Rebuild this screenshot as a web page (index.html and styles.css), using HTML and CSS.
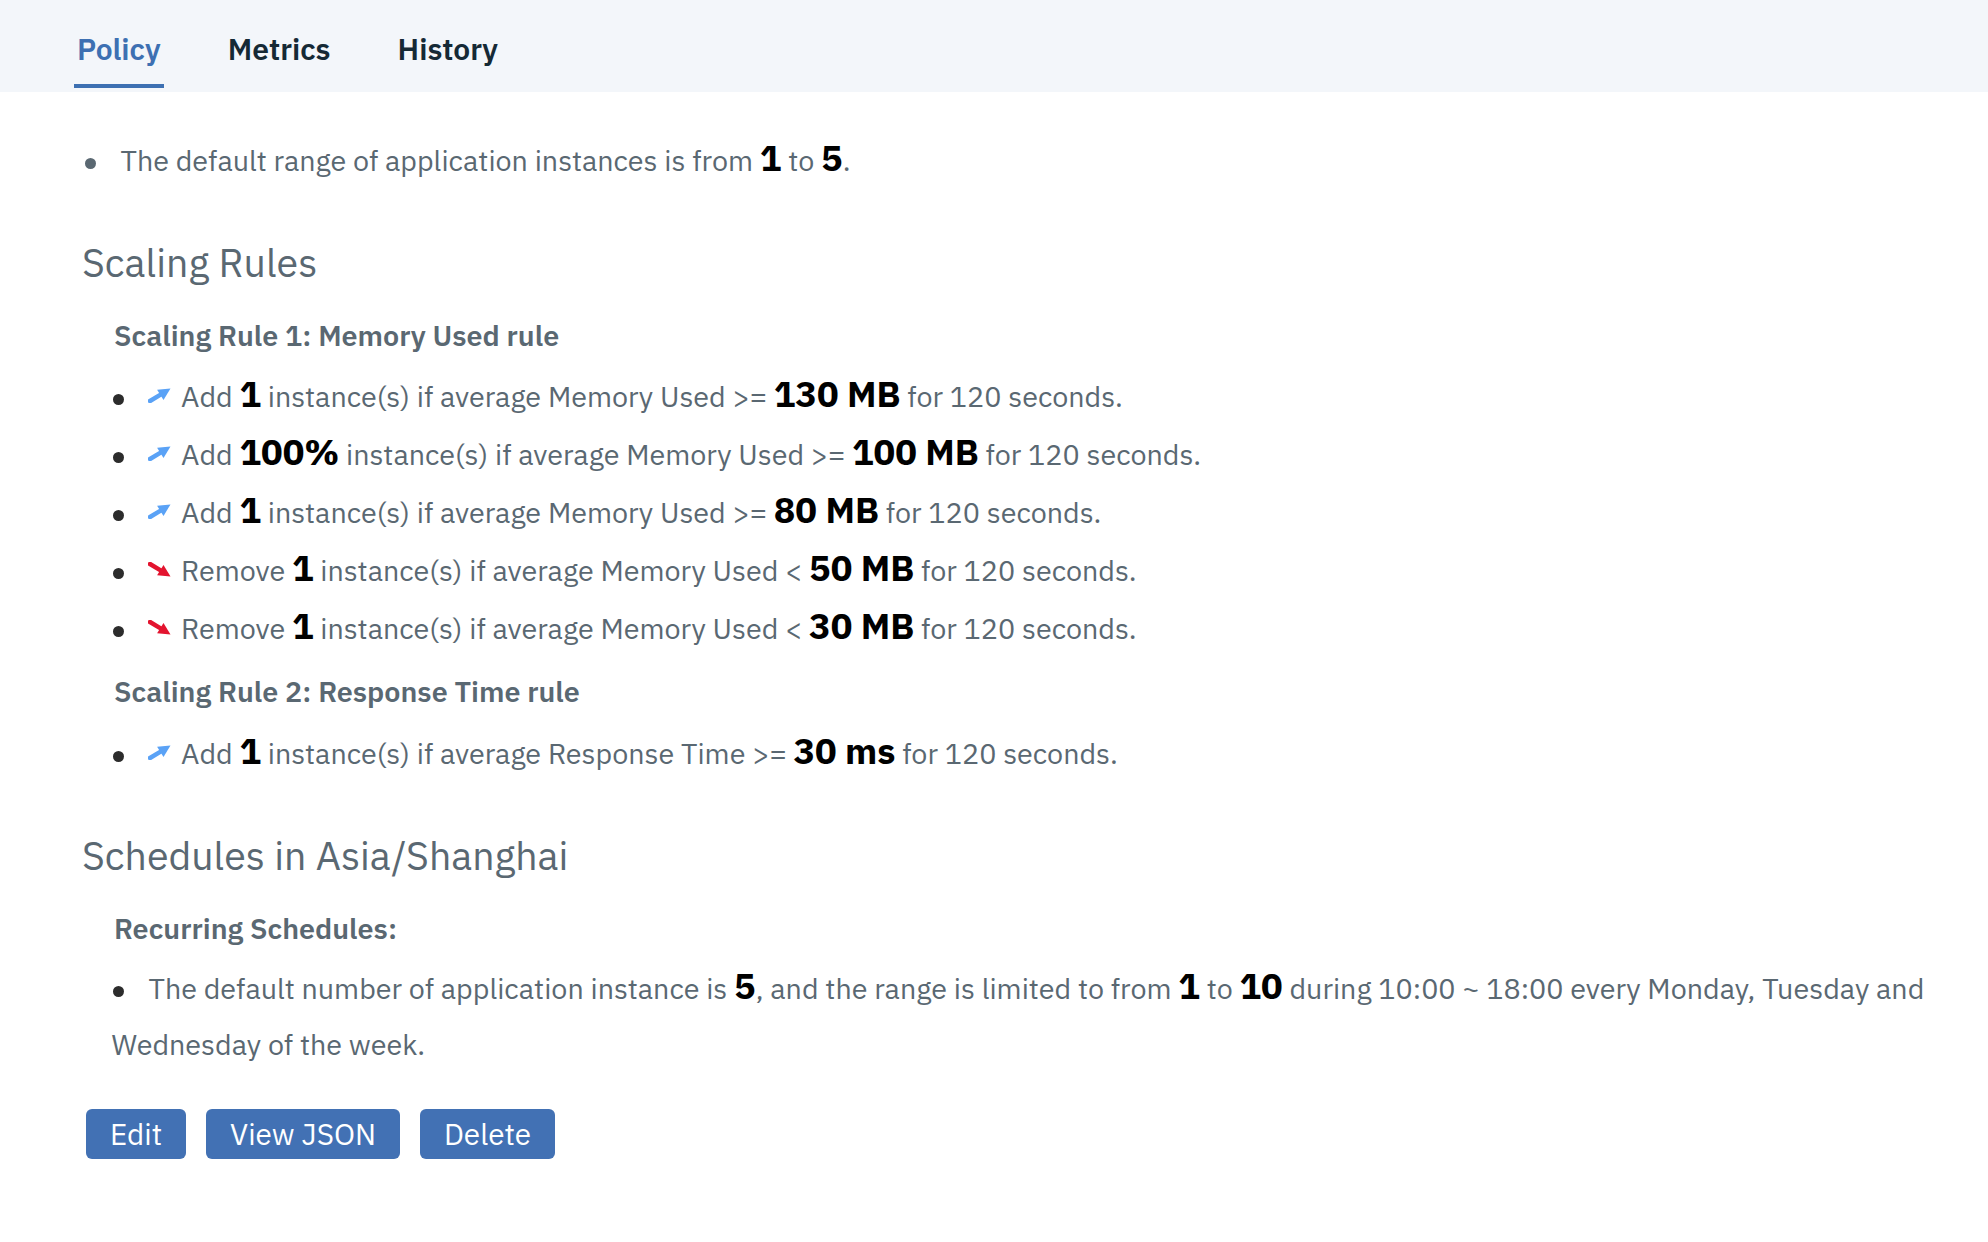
FILE: index.html
```html
<!DOCTYPE html>
<html lang="en">
<head>
<meta charset="utf-8">
<title>Policy</title>
<link rel="stylesheet" href="styles.css">
</head>
<body>
<nav class="tabs">
  <a class="tab tab-active">Policy</a>
  <a class="tab">Metrics</a>
  <a class="tab">History</a>
</nav>
<main class="content">
  <ul class="summary">
    <li>The default range of application instances is from <b class="num">1</b> to <b class="num">5</b>.</li>
  </ul>

  <h2 class="section-title">Scaling Rules</h2>

  <section class="rule">
    <h3 class="rule-title">Scaling Rule 1: Memory Used rule</h3>
    <ul class="rule-list">
      <li><svg class="arrow arrow-up" viewBox="0 0 23 15"><line x1="2" y1="13" x2="13" y2="6.4" /><polygon points="22.5,0.5 15.5,11.9 9.1,1.7" /></svg>Add <b class="num">1</b> instance(s) if average Memory Used &gt;= <b class="num">130 MB</b> for 120 seconds.</li>
      <li><svg class="arrow arrow-up" viewBox="0 0 23 15"><line x1="2" y1="13" x2="13" y2="6.4" /><polygon points="22.5,0.5 15.5,11.9 9.1,1.7" /></svg>Add <b class="num">100%</b> instance(s) if average Memory Used &gt;= <b class="num">100 MB</b> for 120 seconds.</li>
      <li><svg class="arrow arrow-up" viewBox="0 0 23 15"><line x1="2" y1="13" x2="13" y2="6.4" /><polygon points="22.5,0.5 15.5,11.9 9.1,1.7" /></svg>Add <b class="num">1</b> instance(s) if average Memory Used &gt;= <b class="num">80 MB</b> for 120 seconds.</li>
      <li><svg class="arrow arrow-down" viewBox="0 0 23 15"><line x1="2" y1="2" x2="13" y2="8.6" /><polygon points="22.5,14.5 15.5,3.1 9.1,13.3" /></svg>Remove <b class="num">1</b> instance(s) if average Memory Used &lt; <b class="num">50 MB</b> for 120 seconds.</li>
      <li><svg class="arrow arrow-down" viewBox="0 0 23 15"><line x1="2" y1="2" x2="13" y2="8.6" /><polygon points="22.5,14.5 15.5,3.1 9.1,13.3" /></svg>Remove <b class="num">1</b> instance(s) if average Memory Used &lt; <b class="num">30 MB</b> for 120 seconds.</li>
    </ul>
  </section>

  <section class="rule">
    <h3 class="rule-title">Scaling Rule 2: Response Time rule</h3>
    <ul class="rule-list">
      <li><svg class="arrow arrow-up" viewBox="0 0 23 15"><line x1="2" y1="13" x2="13" y2="6.4" /><polygon points="22.5,0.5 15.5,11.9 9.1,1.7" /></svg>Add <b class="num">1</b> instance(s) if average Response Time &gt;= <b class="num">30 ms</b> for 120 seconds.</li>
    </ul>
  </section>

  <h2 class="section-title">Schedules in Asia/Shanghai</h2>

  <section class="rule">
    <h3 class="rule-title">Recurring Schedules:</h3>
    <ul class="schedule-list">
      <li><span>The default number of application instance is</span> <b class="num">5</b><span>, and the range is limited to from</span> <b class="num">1</b> <span>to</span> <b class="num">10</b> <span>during 10:00 ~ 18:00 every Monday, Tuesday and</span> <span>Wednesday of the week.</span></li>
    </ul>
  </section>

  <div class="actions">
    <button class="btn" type="button">Edit</button>
    <button class="btn" type="button">View JSON</button>
    <button class="btn" type="button">Delete</button>
  </div>
</main>
</body>
</html>
```
FILE: styles.css
```css
html, body {
  margin: 0;
  padding: 0;
  background: #ffffff;
}

body {
  font-family: "IBM Plex Sans", Roboto, "Liberation Sans", sans-serif;
  color: #5a6872;
}

.tabs {
  box-sizing: border-box;
  height: 92px;
  background: #f3f6fa;
  display: flex;
  align-items: flex-end;
  gap: 61px;
  padding: 0 0 4px 74px;
}

.tab {
  font-size: 30px;
  line-height: 36px;
  font-weight: 600;
  color: #152935;
  padding: 0 3px 17px;
  border-bottom: 4px solid transparent;
}

.tab-active {
  color: #3d70b2;
  border-bottom-color: #3d70b2;
}

.content {
  padding: 0 33px 40px 82px;
  font-size: 28.7px;
}

ul {
  list-style: none;
  margin: 0;
  padding: 0;
}

.summary {
  margin-top: 40px;
  line-height: 57.6px;
}

.summary li::before {
  content: "";
  display: inline-block;
  width: 11px;
  height: 11px;
  border-radius: 50%;
  background: #5a6872;
  vertical-align: middle;
  margin: 0 25px 0 2.5px;
}

.num {
  font-weight: 700;
  font-size: 36px;
  line-height: 1;
  color: #000000;
}

.section-title {
  margin: 48px 0 20px;
  font-size: 39.3px;
  line-height: 49px;
  font-weight: 400;
  color: #5a6872;
}

.rule-title {
  margin: 0 0 4px 32px;
  font-size: 28.7px;
  line-height: 57.6px;
  font-weight: 600;
  color: #5a6872;
}

.rule-list {
  margin: 0 0 5px 29px;
  line-height: 58px;
}

.rule-list li::before,
.schedule-list li::before {
  content: "";
  display: inline-block;
  width: 11px;
  height: 11px;
  border-radius: 50%;
  background: #2c2c2c;
  vertical-align: middle;
  margin: 0 24.5px 0 1.5px;
}

.arrow {
  width: 23px;
  height: 15px;
  vertical-align: 4px;
  margin-right: 10px;
}

.arrow line {
  stroke-width: 4.4;
  stroke-linecap: round;
}

.arrow-up line { stroke: #5aa2f6; }
.arrow-up polygon { fill: #5aa2f6; }
.arrow-down line { stroke: #e3142f; }
.arrow-down polygon { fill: #e3142f; }

.schedule-list {
  margin: 0 0 0 29.5px;
  line-height: 56px;
}

.actions {
  display: flex;
  gap: 20px;
  margin: 36px 0 0 4px;
}

.btn {
  font-family: inherit;
  font-size: 29.7px;
  line-height: 50px;
  height: 50px;
  padding: 0 24px;
  border: 0;
  border-radius: 6px;
  background: #4271b4;
  color: #ffffff;
}
```
